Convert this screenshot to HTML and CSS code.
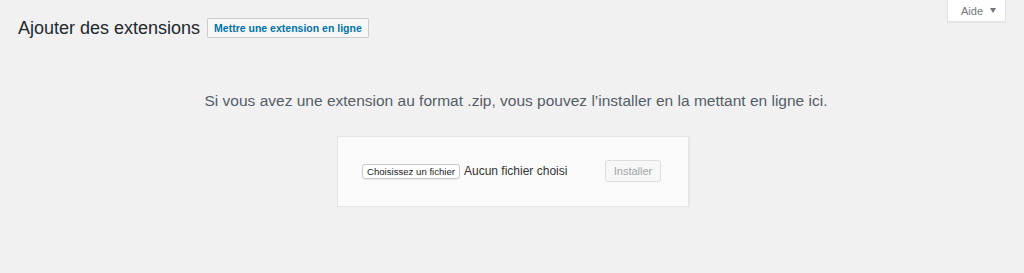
FILE: index.html
```html
<!DOCTYPE html>
<html lang="fr">
<head>
  <meta charset="UTF-8" />
  <meta name="viewport" content="width=device-width, initial-scale=1.0" />
  <title>Ajouter des extensions</title>
  <link rel="stylesheet" href="styles.css">
</head>
<body>
  <div class="wrap">
    <div class="topbar">
      <div class="title-row">
        <h1>Ajouter des extensions</h1>
        <a href="#upload" class="title-action">Mettre une extension en ligne</a>
      </div>
      <button class="help-tab" type="button">Aide <span class="caret"></span></button>
    </div>

    <section class="upload-plugin" id="upload">
      <p class="install-help">Si vous avez une extension au format .zip, vous pouvez l’installer en la mettant en ligne ici.</p>
      <form class="upload-form">
        <div class="file-field">
          <span class="file-btn">Choisissez un fichier</span>
          <span class="file-name">Aucun fichier choisi</span>
        </div>
        <button type="submit" class="install-btn" disabled>Installer</button>
      </form>
    </section>
  </div>
</body>
</html>
```

FILE: styles.css
```css
body {
  margin: 0;
  font-family: 'Liberation Sans', Arial, sans-serif;
  background: #f1f1f1;
  color: #444;
}
.wrap {
  padding: 0 16px 0 18px;
}
.topbar {
  display: flex;
  justify-content: space-between;
  align-items: flex-start;
}
.title-row {
  display: flex;
  align-items: center;
  margin-top: 16px;
}
.title-row h1 {
  margin: 0;
  font-size: 18px;
  font-weight: 400;
  line-height: 24px;
  color: #23282d;
}
.title-action {
  margin-left: 7px;
  height: 20px;
  box-sizing: border-box;
  padding: 0 6px;
  line-height: 18px;
  font-size: 10.5px;
  font-weight: 700;
  color: #0073aa;
  text-decoration: none;
  background: #f7f7f7;
  border: 1px solid #ccc;
  border-radius: 2px;
}
.help-tab {
  margin-right: 2px;
  height: 22px;
  width: 59px;
  padding: 0 0 0 13px;
  display: flex;
  align-items: center;
  font-family: inherit;
  font-size: 11px;
  color: #72777c;
  background: #fff;
  border: 1px solid #e2e2e2;
  border-top: none;
  box-shadow: 0 1px 1px rgba(0, 0, 0, 0.04);
  cursor: pointer;
}
.caret {
  margin-left: 7px;
  width: 0;
  height: 0;
  border-left: 3.5px solid transparent;
  border-right: 3.5px solid transparent;
  border-top: 5px solid #72777c;
}
.install-help {
  margin: 51px 0 0;
  padding-left: 6px;
  text-align: center;
  font-size: 15.5px;
  line-height: 20px;
  color: #555d66;
}
.upload-form {
  width: 352px;
  box-sizing: border-box;
  margin: 25px auto 0;
  padding: 23px 27px 24px 24px;
  display: flex;
  justify-content: space-between;
  align-items: center;
  background: #fafafa;
  border: 1px solid #e5e5e5;
  box-shadow: 1px 1px 1px rgba(0, 0, 0, 0.03);
}
.file-field {
  display: flex;
  align-items: center;
}
.file-btn {
  width: 98px;
  height: 15px;
  box-sizing: border-box;
  text-align: center;
  font-size: 9.6px;
  line-height: 13px;
  color: #222;
  background: #fff;
  border: 1px solid #c9c9c9;
  border-radius: 3px;
  box-shadow: 0 1px 0 rgba(0, 0, 0, 0.05);
}
.file-name {
  margin-left: 4px;
  font-size: 12px;
  color: #333;
}
.install-btn {
  width: 56px;
  height: 22px;
  padding: 0;
  font-family: inherit;
  font-size: 11px;
  color: #a0a5aa;
  background: #f7f7f7;
  border: 1px solid #ddd;
  border-radius: 3px;
}
```
